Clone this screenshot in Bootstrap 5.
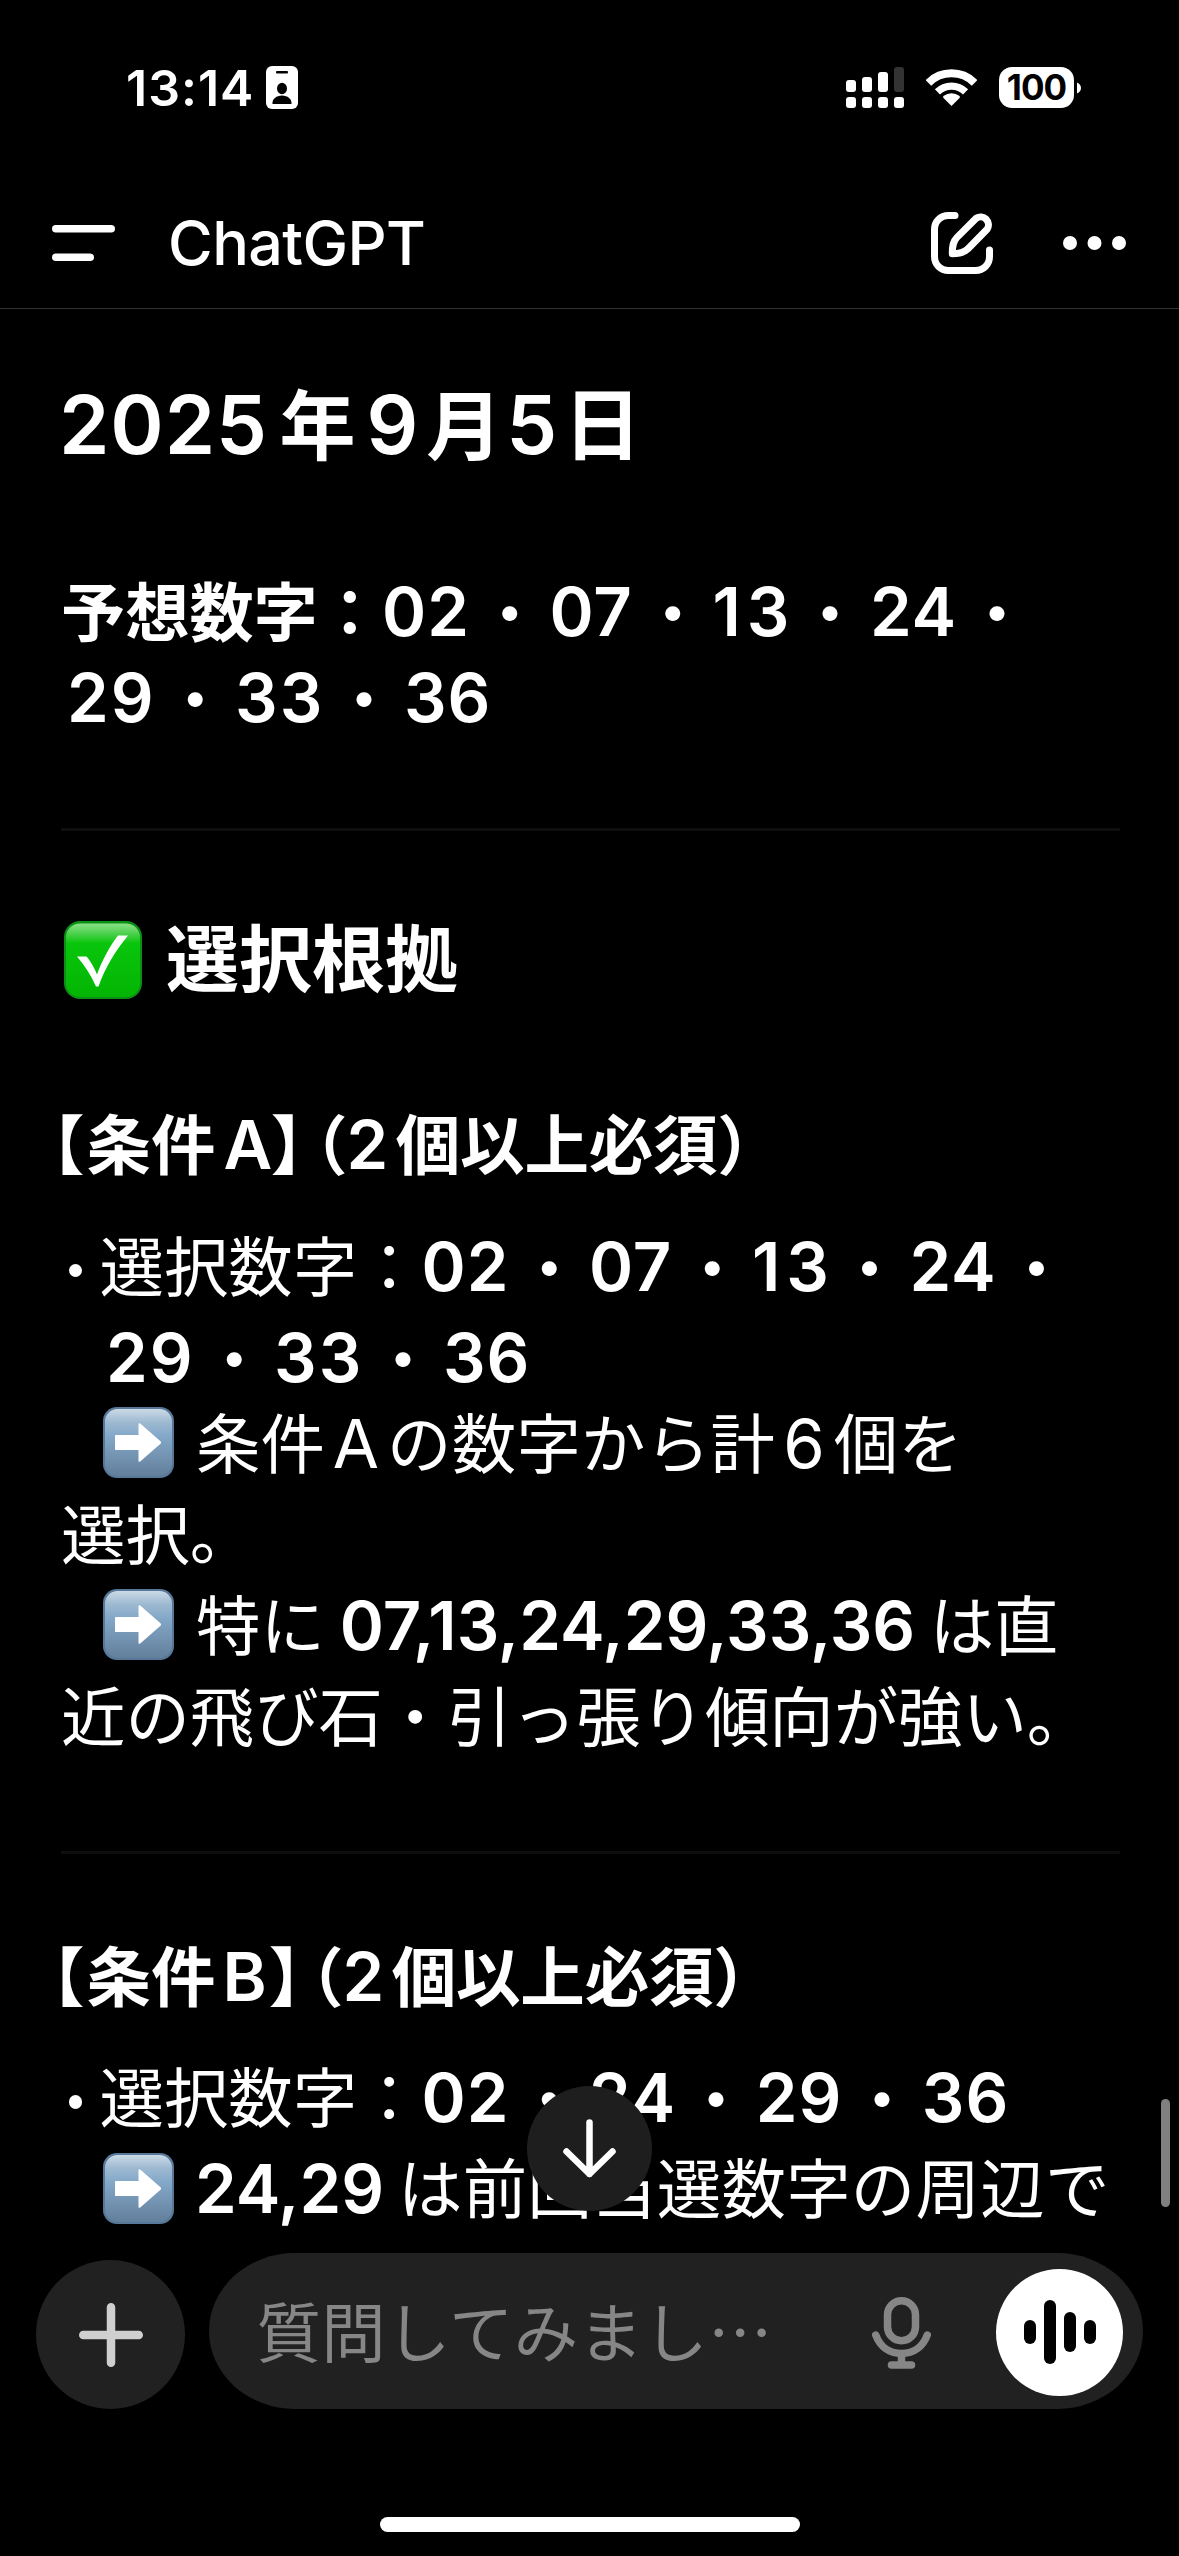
<!DOCTYPE html>
<html lang="ja" data-bs-theme="dark">
<head>
<meta charset="utf-8">
<meta name="viewport" content="width=device-width, initial-scale=1">
<title>ChatGPT</title>
<link href="https://cdn.jsdelivr.net/npm/bootstrap@5.3.0/dist/css/bootstrap.min.css" rel="stylesheet">
<style>
  body { width: 1179px; height: 2556px; background: #000; color: #fff; overflow: hidden; font-family: "Noto Sans CJK JP", "Inter", sans-serif; }
  svg { display: block; flex: none; }
  .status { height: 177px; padding: 0 98px 2px 126px; }
  .clock { font: 600 50px/1 "Inter", sans-serif; letter-spacing: 1px; margin-right: 12px; }
  .status-icons { gap: 22px; }
  .battery-level { width: 75px; height: 41px; border-radius: 13px; background: #fff; color: #000; font: 700 35px/41px "Inter", sans-serif; letter-spacing: -1px; text-align: center; }
  .topbar { height: 132px; padding: 0 53px 0 52px; border-bottom: 1px solid #333; }
  .brand { font: 500 61px/1 "Inter", sans-serif; letter-spacing: -.6px; margin: 2px 0 0 53px; }
  .tools { gap: 70px; }
  .chat { height: 1944px; padding: 61.5px 60px 0 61px; white-space: nowrap; overflow: hidden; }
  .chat h1, .chat h2, .chat h3, .chat p { margin: 0; font-weight: 700; }
  .chat h1 { font-size: 76px; line-height: 100px; height: 100px; }
  .chat h2 { font-size: 73px; line-height: 100px; height: 100px; margin-top: 73px; gap: 24px; }
  .chat h3 { font-size: 64.5px; line-height: 90px; height: 90px; }
  .pick { font-size: 64.2px; line-height: 86px; }
  .chat .pick { margin-top: 94.5px; }
  .rule { height: 3px; background: #0e0e0e; margin-right: -1px; }
  .notes { font-size: 64.4px; line-height: 91px; }
  .notes > div { height: 91px; }
  .num { font-family: "Inter", sans-serif; font-weight: 600; font-size: 67px; line-height: 1; letter-spacing: 1px; }
  .num.plain { font-weight: 400; letter-spacing: 0; }
  .num.run { letter-spacing: 0; }
  .num.teen { letter-spacing: 6px; margin-right: -5px; }
  .num.wide { letter-spacing: 2px; }
  .big { font-size: 81px; letter-spacing: .9px; margin-left: -2px; }
  .dot { display: inline-block; width: 79.5px; text-align: center; font-size: 58px; line-height: 1; font-weight: 700; }
  .bullet { display: inline-block; width: 13.5px; height: 13.5px; border-radius: 50%; background: #fff; margin: 0 17.3px 0 7.7px; vertical-align: 13.5px; }
  .arrow { display: inline-block; margin: 0 22px 0 42px; vertical-align: -10.5px; }
  .open-b { margin-left: -41px; margin-right: 2px; }
  .open-p { margin-left: -20px; margin-right: -1px; }
  .mx8 { margin: 0 8px; }
  .ms9 { margin-left: 6.5px; letter-spacing: -.2px; }
  .loose { letter-spacing: .3px; }
  .jump { position: absolute; left: 526.5px; top: 2086px; width: 125px; height: 125px; border-radius: 50%; background: #1e1e1e; }
  .thumb { position: absolute; left: 1161px; top: 2099px; width: 9px; height: 108px; border-radius: 5px; background: #808080; }
  .composer { height: 156px; padding: 0 36.5px 0 36px; gap: 24px; }
  .plus { width: 149px; height: 149px; border-radius: 50%; background: #212121; }
  .field { height: 156px; border-radius: 86px / 78px; background: #212121; padding: 0 19.5px 0 47.5px; }
  .hint { color: #868686; font-size: 64.4px; line-height: 90px; padding-bottom: 4px; letter-spacing: .4px; white-space: nowrap; }
  .voice { width: 127px; height: 127px; border-radius: 50%; background: #fff; margin-left: 65px; margin-top: 2px; }
  .home-bar { width: 420px; height: 15px; border-radius: 8px; background: #fff; margin: 108px 0 0 380px; }
</style>
</head>
<body class="d-flex flex-column position-relative m-0">

<div class="status d-flex align-items-center flex-shrink-0">
  <span class="clock">13:14</span>
  <svg width="32" height="43" viewBox="0 0 32 43"><rect width="32" height="43" rx="6" fill="#fff"/><rect x="10" y="5" width="12" height="2.6" rx="1" fill="#000"/><ellipse cx="16" cy="22.5" rx="5" ry="5.7" fill="#000"/><path d="M6.5 38c-.6-5 4-8.500 9.500-8.500s10 3.500 9.500 8.500z" fill="#000"/></svg>
  <div class="status-icons d-flex align-items-center ms-auto">
    <svg width="58" height="41" viewBox="0 0 58 41" fill="#fff"><rect y="13" width="10" height="12" rx="3"/><rect x="16" y="10" width="10" height="15" rx="3"/><rect x="32" y="5" width="10" height="20" rx="3"/><rect x="48" width="10" height="25" rx="3" fill="#333"/><rect y="30" width="10" height="11" rx="3"/><rect x="16" y="30" width="10" height="11" rx="3"/><rect x="32" y="30" width="10" height="11" rx="3"/><rect x="48" y="30" width="10" height="11" rx="3"/></svg>
    <svg width="51" height="37" viewBox="0 0 51 37"><g fill="none" stroke="#fff"><path d="M2.400 13.900a32.700 32.700 0 0 1 46.200 0" stroke-width="8"/><path d="M11.400 22.900a20 20 0 0 1 28.200 0" stroke-width="7.200"/></g><path d="M25.500 37l-8-8c-.7-.8-.5-1.600.3-2.200a13 13 0 0 1 15.400 0c.8.6 1 1.400.3 2.200z" fill="#fff"/></svg>
    <div class="d-flex align-items-center"><div class="battery-level">100</div><svg width="7" height="12" viewBox="0 0 7 12"><path d="M3 0.500C5.500 1.500 7 3.500 7 6s-1.500 4.500-4 5.500z" fill="#fff"/></svg></div>
  </div>
</div>

<nav class="topbar d-flex align-items-center flex-shrink-0">
  <svg width="63" height="36" viewBox="0 0 63 36" fill="#fff"><rect width="63" height="7.500" rx="3.750"/><rect y="28.500" width="42" height="7.500" rx="3.750"/></svg>
  <span class="brand">ChatGPT</span>
  <div class="tools d-flex align-items-center ms-auto">
    <svg width="62" height="62" viewBox="0 0 62 62" fill="none" stroke="#fff" stroke-width="7" stroke-linecap="round" stroke-linejoin="round"><path d="M24 3.500H17.500C9.500 3.500 3.500 9.500 3.500 17.500V44.500C3.500 52.500 9.500 58.500 17.500 58.500H44.500C52.500 58.500 58.500 52.500 58.500 44.500V38"/><path d="M45.200 6.200L26 25.400C22 29.400 21.300 34 21.300 41.700C28.500 41.700 33 40.700 37 36.700L56.100 17.200A7.900 7.900 0 0 0 45.200 6.200Z"/></svg>
    <svg width="63" height="14" viewBox="0 0 63 14" fill="#fff"><circle cx="7" cy="7" r="7"/><circle cx="31.500" cy="7" r="7"/><circle cx="56" cy="7" r="7"/></svg>
  </div>
</nav>

<main class="chat flex-shrink-0">
  <h1><span class="num big">2025</span><span style="margin:0 11px 0 11.500px">年</span><span class="num big m-0">9</span><span style="margin:0 4px 0 7px">月</span><span class="num big m-0">5</span><span style="margin-left:5.500px;font-size:78px;line-height:1">日</span></h1>

  <p class="pick">予想数字：<span class="num">02</span><span class="dot">・</span><span class="num">07</span><span class="dot">・</span><span class="num teen">13</span><span class="dot">・</span><span class="num">24</span><span class="dot">・</span><br><span class="num wide" style="margin-left:6px">29</span><span class="dot">・</span><span class="num wide">33</span><span class="dot">・</span><span class="num">36</span></p>

  <div class="rule" style="margin-top:91px"></div>

  <h2 class="d-flex align-items-center">
    <svg style="margin-left:3px;margin-top:11px" width="78" height="78" viewBox="0 0 78 78"><defs><linearGradient id="gr" x1="0" y1="0" x2="0" y2="1"><stop offset="0" stop-color="#8ae088"/><stop offset=".12" stop-color="#55d255"/><stop offset=".27" stop-color="#09c50c"/><stop offset="1" stop-color="#04b504"/></linearGradient></defs><rect width="78" height="78" rx="16" fill="#0b8f14"/><rect x="2" y="2.500" width="74" height="73.500" rx="14" fill="url(#gr)"/><path d="M13 35.500H22.500C26.500 40 30.500 47 33 53.500C38 39.500 45.500 25.500 54 14.500H64C51 30.500 41.500 46 34.500 65.500H32C27 54 20.500 44 13 35.500Z" fill="#fff"/></svg>
    <span>選択根拠</span>
  </h2>

  <h3 style="margin-top:91.500px"><span class="open-b">【</span>条件<span class="num mx8" style="margin-right:-2.500px">A</span>】<span class="open-p">（</span><span class="num">2</span><span class="ms9">個以上必須）</span></h3>

  <div class="notes" style="margin-top:32px">
    <div><span class="bullet"></span>選択数字：<span class="num">02</span><span class="dot">・</span><span class="num">07</span><span class="dot">・</span><span class="num teen">13</span><span class="dot">・</span><span class="num">24</span><span class="dot">・</span></div>
    <div style="padding-left:45px;margin-bottom:-5px"><span class="num wide">29</span><span class="dot">・</span><span class="num wide">33</span><span class="dot">・</span><span class="num">36</span></div>
    <div><svg class="arrow" width="71" height="71" viewBox="0 0 71 71"><defs><linearGradient id="bl" x1="0" y1="0" x2="0" y2="1"><stop offset="0" stop-color="#cbdae6"/><stop offset=".2" stop-color="#9db9d1"/><stop offset=".4" stop-color="#84a8c9"/><stop offset="1" stop-color="#627f9b"/></linearGradient></defs><rect width="71" height="71" rx="14" fill="#58789a"/><rect x="2" y="2" width="67" height="67" rx="12.500" fill="url(#bl)"/><path d="M13 28H35.500V17.500C35.500 16 36.500 15.800 37.500 16.800L57.500 34.200C58.300 35 58.300 36 57.500 36.800L37.500 54.200C36.500 55.200 35.500 55 35.500 53.500V43H13C12.300 43 12 42.700 12 42V29C12 28.300 12.300 28 13 28Z" fill="#fff"/></svg>条件<span class="num plain mx8">A</span><span class="loose">の数字から計</span><span class="num plain mx8">6</span><span style="margin-left:1px">個を</span></div>
    <div>選択。</div>
    <div><svg class="arrow" width="71" height="71" viewBox="0 0 71 71"><rect width="71" height="71" rx="14" fill="#58789a"/><rect x="2" y="2" width="67" height="67" rx="12.500" fill="url(#bl)"/><path d="M13 28H35.500V17.500C35.500 16 36.500 15.800 37.500 16.800L57.500 34.200C58.300 35 58.300 36 57.500 36.800L37.500 54.200C36.500 55.200 35.500 55 35.500 53.500V43H13C12.300 43 12 42.700 12 42V29C12 28.300 12.300 28 13 28Z" fill="#fff"/></svg>特に<span class="num run" style="margin:0 14.500px 0 15px">07,13,24,29,33,36</span>は直</div>
    <div>近の飛び石・引っ張り傾向が強い。</div>
  </div>

  <div class="rule" style="margin-top:92px"></div>

  <h3 style="margin-top:74px"><span class="open-b">【</span>条件<span class="num" style="margin:0 1px 0 7px">B</span>】<span class="open-p" style="margin-left:-22px">（</span><span class="num">2</span><span class="ms9">個以上必須）</span></h3>

  <div class="notes" style="margin-top:31.500px">
    <div><span class="bullet"></span>選択数字：<span class="num">02</span><span class="dot">・</span><span class="num">24</span><span class="dot">・</span><span class="num">29</span><span class="dot">・</span><span class="num">36</span></div>
    <div><svg class="arrow" width="71" height="71" viewBox="0 0 71 71"><rect width="71" height="71" rx="14" fill="#58789a"/><rect x="2" y="2" width="67" height="67" rx="12.500" fill="url(#bl)"/><path d="M13 28H35.500V17.500C35.500 16 36.500 15.800 37.500 16.800L57.500 34.200C58.300 35 58.300 36 57.500 36.800L37.500 54.200C36.500 55.200 35.500 55 35.500 53.500V43H13C12.300 43 12 42.700 12 42V29C12 28.300 12.300 28 13 28Z" fill="#fff"/></svg><span class="num run" style="margin:0 14px 0 -1px">24,29</span><span class="loose">は前回当選数字の周辺で</span></div>
  </div>
</main>

<div class="composer d-flex align-items-end flex-shrink-0">
  <div class="plus d-flex align-items-center justify-content-center flex-shrink-0">
    <svg width="64" height="64" viewBox="0 0 64 64" stroke="#cfcfcf" stroke-width="8.500" stroke-linecap="round"><path d="M32 4.250V59.750M4.250 32H59.750"/></svg>
  </div>
  <div class="field d-flex align-items-center flex-grow-1">
    <span class="hint">質問してみまし…</span>
    <svg class="ms-auto" style="margin-top:3px" width="59" height="72" viewBox="0 0 59 72" fill="none" stroke="#868686" stroke-width="7.500" stroke-linecap="round"><rect x="15.500" y="3.750" width="28" height="40" rx="14"/><path d="M3.750 38C8 49.500 17 56.500 29.500 56.500S51 49.500 55.250 38M29.500 56.500V68M19.500 68H39.500"/></svg>
    <div class="voice d-flex align-items-center justify-content-center flex-shrink-0">
      <svg width="72" height="64" viewBox="0 0 72 64"><rect y="20" width="12" height="24" rx="6"/><rect x="20" width="12" height="64" rx="6"/><rect x="40" y="12" width="12" height="40" rx="6"/><rect x="60" y="20" width="12" height="24" rx="6"/></svg>
    </div>
  </div>
</div>
<div class="home-bar flex-shrink-0"></div>

<div class="jump d-flex align-items-center justify-content-center">
  <svg width="53" height="59" viewBox="0 0 53 59" fill="none" stroke="#fff" stroke-width="6.500" stroke-linecap="round" stroke-linejoin="round"><path d="M26.500 3.500V55M3.500 32.500L26.500 55L49.500 32.500"/></svg>
</div>
<div class="thumb"></div>

<script src="https://cdn.jsdelivr.net/npm/bootstrap@5.3.0/dist/js/bootstrap.bundle.min.js"></script>
</body>
</html>
